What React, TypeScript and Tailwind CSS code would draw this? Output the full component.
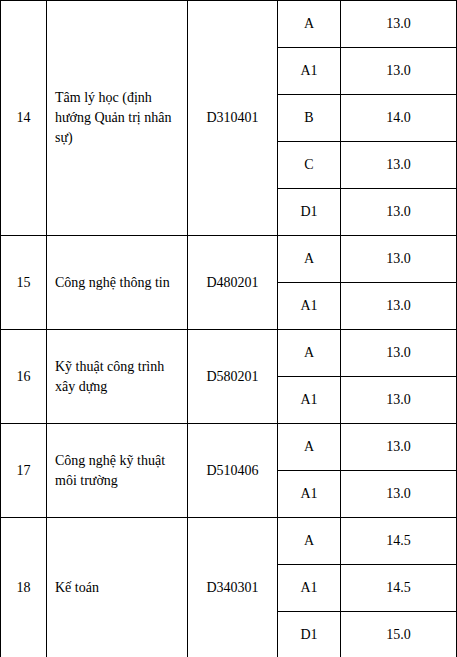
import React from "react";

type TRow = {
  no: string;
  name: string;
  code: string;
  scores: [string, string][];
};

const rows: TRow[] = [
  {
    no: "14",
    name: "Tâm lý học (định hướng Quản trị nhân sự)",
    code: "D310401",
    scores: [
      ["A", "13.0"],
      ["A1", "13.0"],
      ["B", "14.0"],
      ["C", "13.0"],
      ["D1", "13.0"],
    ],
  },
  {
    no: "15",
    name: "Công nghệ thông tin",
    code: "D480201",
    scores: [
      ["A", "13.0"],
      ["A1", "13.0"],
    ],
  },
  {
    no: "16",
    name: "Kỹ thuật công trình xây dựng",
    code: "D580201",
    scores: [
      ["A", "13.0"],
      ["A1", "13.0"],
    ],
  },
  {
    no: "17",
    name: "Công nghệ kỹ thuật môi trường",
    code: "D510406",
    scores: [
      ["A", "13.0"],
      ["A1", "13.0"],
    ],
  },
  {
    no: "18",
    name: "Kế toán",
    code: "D340301",
    scores: [
      ["A", "14.5"],
      ["A1", "14.5"],
      ["D1", "15.0"],
    ],
  },
];

const App = () => {
  return (
    <div className="min-h-screen bg-white">
      <div className="w-[457px] border-l border-t border-black font-['Liberation_Serif'] text-[14px] leading-[20px] text-black">
        {rows.map((row) => (
          <div key={row.no} className="flex">
            <div className="w-[46px] shrink-0 flex items-center justify-center border-r border-b border-black">
              {row.no}
            </div>
            <div className="w-[141px] shrink-0 flex items-center px-2 border-r border-b border-black">
              <span>{row.name}</span>
            </div>
            <div className="w-[90px] shrink-0 flex items-center justify-center border-r border-b border-black">
              {row.code}
            </div>
            <div className="flex flex-col">
              {row.scores.map(([block, score]) => (
                <div key={block} className="flex h-[47px]">
                  <div className="w-[63px] flex items-center justify-center border-r border-b border-black">
                    {block}
                  </div>
                  <div className="w-[116px] flex items-center justify-center border-r border-b border-black">
                    {score}
                  </div>
                </div>
              ))}
            </div>
          </div>
        ))}
      </div>
    </div>
  );
};

export default App;
